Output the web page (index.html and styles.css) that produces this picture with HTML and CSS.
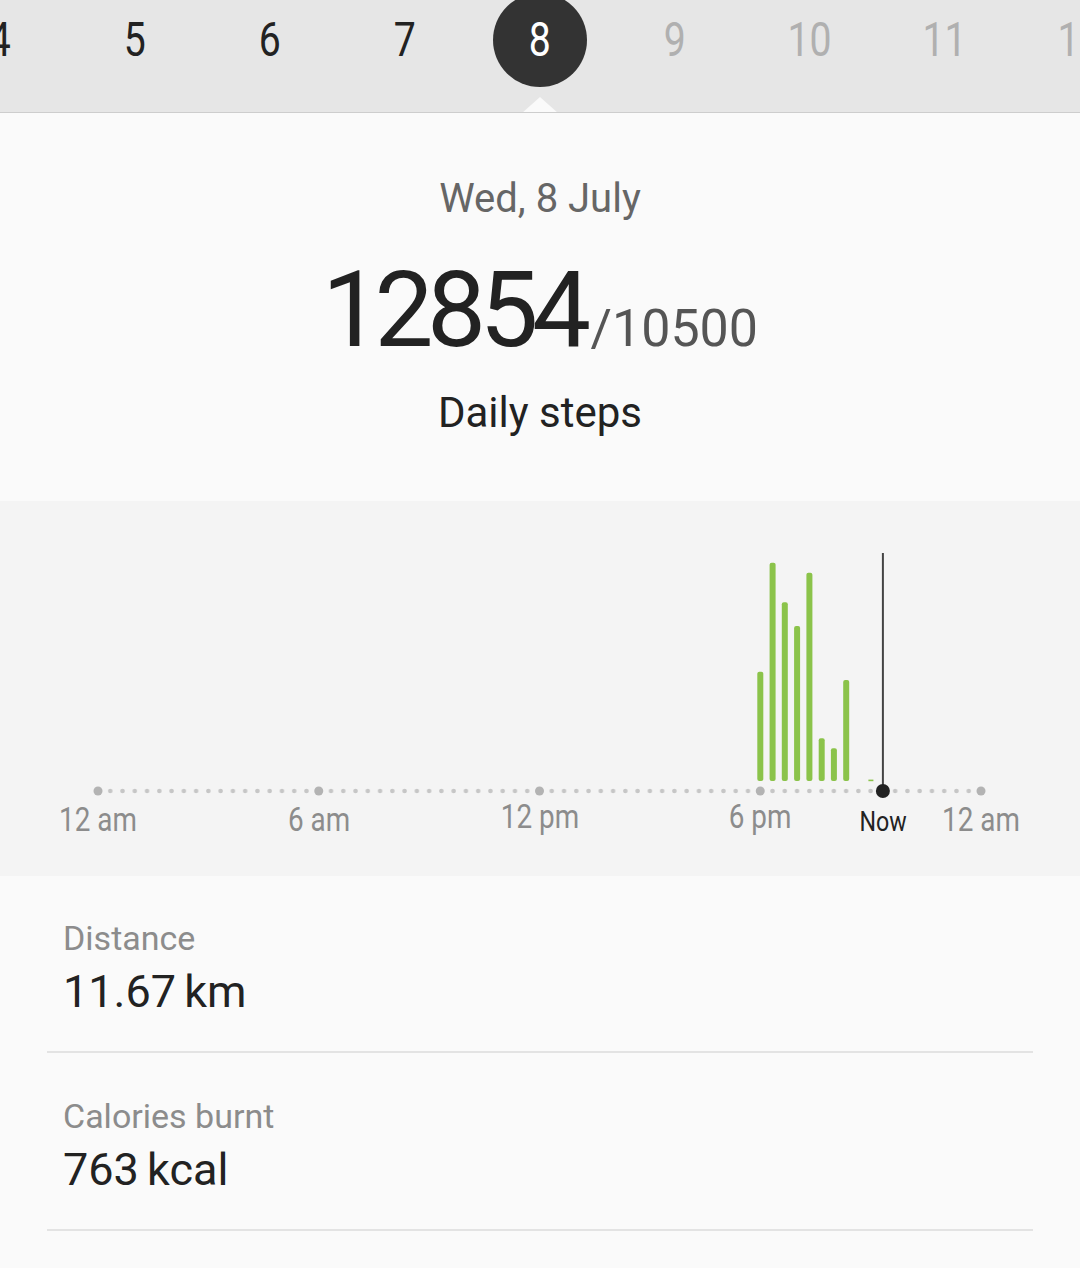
FILE: index.html
```html
<!DOCTYPE html>
<html lang="en">
<head>
  <meta charset="UTF-8" />
  <meta name="viewport" content="width=device-width, initial-scale=1.0" />
  <title>Daily steps</title>
  <link rel="stylesheet" href="styles.css">
</head>
<body>
<header class="date-strip">
  <div class="days">
    <div class="day"><span>4</span></div>
    <div class="day"><span>5</span></div>
    <div class="day"><span>6</span></div>
    <div class="day"><span>7</span></div>
    <div class="day selected"><span>8</span></div>
    <div class="day future"><span>9</span></div>
    <div class="day future"><span>10</span></div>
    <div class="day future"><span>11</span></div>
    <div class="day future"><span>12</span></div>
  </div>
</header>

<section class="summary">
  <div class="date">Wed, 8 July</div>
  <div class="count"><span class="steps">12854</span><span class="target">/10500</span></div>
  <div class="caption">Daily steps</div>
</section>

<section class="chart">
  <!-- hourly steps, one bar per 20 minutes -->
  <svg width="1080" height="375" viewBox="0 0 1080 375">
    <defs>
      <pattern id="tick" x="91.868" y="0" width="12.264" height="375" patternUnits="userSpaceOnUse">
        <circle cx="6.132" cy="290" r="2.3" fill="#c6c6c6"/>
      </pattern>
    </defs>
    <rect x="92" y="285" width="895" height="10" fill="url(#tick)"/>
    <g fill="#b3b3b3">
      <circle cx="98" cy="290" r="4.5"/>
      <circle cx="318.75" cy="290" r="4.5"/>
      <circle cx="539.5" cy="290" r="4.5"/>
      <circle cx="760.25" cy="290" r="4.5"/>
      <circle cx="981" cy="290" r="4.5"/>
    </g>
    <g fill="#8bc34a">
      <rect x="757.3" y="170.7" width="6" height="109.3" rx="2"/>
      <rect x="769.6" y="61.7" width="6" height="218.3" rx="2"/>
      <rect x="781.8" y="101.3" width="6" height="178.7" rx="2"/>
      <rect x="794.1" y="125" width="6" height="155" rx="2"/>
      <rect x="806.4" y="71.7" width="6" height="208.3" rx="2"/>
      <rect x="818.7" y="237.3" width="6" height="42.7" rx="2"/>
      <rect x="830.9" y="247.3" width="6" height="32.7" rx="2"/>
      <rect x="843.2" y="179" width="6" height="101" rx="2"/>
      <rect x="868.4" y="278.6" width="5" height="1.6"/>
    </g>
    <line x1="882.9" y1="52" x2="882.9" y2="290" stroke="#444" stroke-width="2"/>
    <circle cx="882.9" cy="290" r="7" fill="#222"/>
    <g class="axis-label">
      <text transform="translate(98 330) scale(.82 1)">12 am</text>
      <text transform="translate(319 330) scale(.82 1)">6 am</text>
      <text transform="translate(540 327) scale(.82 1)">12 pm</text>
      <text transform="translate(760 327) scale(.82 1)">6 pm</text>
      <text transform="translate(981 330) scale(.82 1)">12 am</text>
    </g>
    <text class="now-label" transform="translate(883 330) scale(.86 1)">Now</text>
  </svg>
</section>

<section class="details">
  <div class="detail">
    <div class="label">Distance</div>
    <div class="value">11.67 km</div>
  </div>
  <div class="detail">
    <div class="label">Calories burnt</div>
    <div class="value">763 kcal</div>
  </div>
</section>
</body>
</html>
```

FILE: styles.css
```css
* {
  margin: 0;
  padding: 0;
  box-sizing: border-box;
}

body {
  font-family: 'Roboto', 'Liberation Sans', sans-serif;
  background-color: #fafafa;
  width: 1080px;
  overflow: hidden;
}

.date-strip {
  position: relative;
  height: 113px;
  background-color: #e6e6e6;
  border-bottom: 1px solid #cdcdcd;
  overflow: hidden;
}

.date-strip::after {
  content: "";
  position: absolute;
  left: 50%;
  bottom: -1px;
  margin-left: -18px;
  border-left: 18px solid transparent;
  border-right: 18px solid transparent;
  border-bottom: 16px solid #fafafa;
}

.days {
  display: flex;
  justify-content: center;
  height: 112px;
}

.day {
  position: relative;
  flex: 0 0 135px;
  text-align: center;
  padding-top: 12px;
  font-size: 49px;
  line-height: 56px;
  color: #222;
}

.day span {
  position: relative;
  z-index: 1;
  display: inline-block;
  transform: scaleX(.8);
}

.day.future {
  color: #b0b0b0;
}

.day.selected {
  color: #fff;
}

.day.selected::before {
  content: "";
  position: absolute;
  left: 50%;
  top: -7px;
  margin-left: -47px;
  width: 94px;
  height: 94px;
  border-radius: 50%;
  background-color: #333;
}

.summary {
  height: 388px;
  padding-top: 64px;
  text-align: center;
  background-color: #fafafa;
}

.date {
  font-size: 40px;
  line-height: 44px;
  color: #666;
}

.count {
  margin-top: 35px;
  line-height: 110px;
  color: #222;
}

.steps {
  font-size: 105px;
  letter-spacing: -6.5px;
}

.target {
  font-size: 52px;
  color: #555;
  margin-left: 6px;
}

.caption {
  margin-top: -7px;
  font-size: 42px;
  line-height: 48px;
  color: #222;
}

.chart {
  height: 375px;
  background-color: #f4f4f4;
}

.chart svg {
  display: block;
}

.axis-label text {
  font-family: 'Roboto', sans-serif;
  font-size: 34px;
  fill: #8c8c8c;
  text-anchor: middle;
}

.now-label {
  font-family: 'Roboto', sans-serif;
  font-size: 27px;
  fill: #222;
  text-anchor: middle;
}

.details {
  background-color: #fafafa;
}

.detail {
  margin: 0 47px;
  padding: 42px 16px 33px;
  border-bottom: 2px solid #e3e3e3;
}

.detail + .detail {
  padding-top: 43px;
}

.label {
  font-size: 34px;
  line-height: 40px;
  color: #8c8c8c;
}

.value {
  margin-top: 8px;
  font-size: 45px;
  line-height: 52px;
  color: #222;
  word-spacing: -3px;
}
```
